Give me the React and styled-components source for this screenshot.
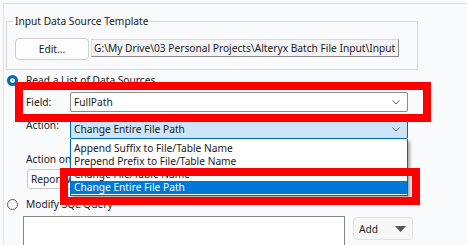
import styled, { createGlobalStyle } from "styled-components";

const GlobalStyle = createGlobalStyle`
  html, body {
    margin: 0;
    padding: 0;
    background: #f9fafc;
  }
  body {
    font-family: "Noto Sans", "Open Sans", sans-serif;
    font-size: 10.2px;
    color: #1b1b1b;
  }
`;

const Page = styled.div`
  position: relative;
  width: 467px;
  height: 245px;
  overflow: hidden;
  background: #f9fafc;
`;

const Frame = styled.div`
  margin: 3px 0 0 3px;
  height: 242px;
  box-sizing: border-box;
  border-top: 1px solid #dde2ea;
  border-left: 1px solid #dde2ea;
`;

const GroupBox = styled.fieldset`
  margin: 9px 0 0 2px;
  width: 412px;
  box-sizing: border-box;
  padding: 0 6px 9px;
  border: 1px solid #d6d6d6;
  min-width: 0;
`;

const Caption = styled.legend`
  padding: 0 2px;
  line-height: 16px;
`;

const TemplateRow = styled.div`
  display: flex;
  align-items: flex-start;
  gap: 2px;
  margin: 9px 0 0 2px;
`;

const Button = styled.div`
  width: 74px;
  height: 22px;
  box-sizing: border-box;
  border: 1px solid #cfcfcf;
  border-radius: 4px;
  background: #fdfdfd;
  display: flex;
  align-items: center;
  justify-content: center;
`;

const PathBox = styled.div`
  margin-top: 1px;
  width: 308px;
  height: 18px;
  box-sizing: border-box;
  padding: 0 2px;
  border: 1px solid;
  border-color: #d9d9d9 #8a8a8a #8a8a8a #d9d9d9;
  background: #f4f4f4;
  white-space: nowrap;
  overflow: hidden;
  line-height: 16px;
`;

const RadioRow = styled.div`
  display: flex;
  align-items: center;
  gap: 8px;
  height: 14px;
  margin: ${({ $top }) => $top}px 0 0 3px;
`;

const Radio = styled.span`
  width: 11px;
  height: 11px;
  box-sizing: border-box;
  border-radius: 50%;
  flex: none;
  ${({ $checked }) =>
    $checked
      ? `background: #0067c0; border: 3px solid #0067c0; box-shadow: inset 0 0 0 2px #fff;`
      : `border: 1px solid #5a5a5a; background: #fdfdfd;`}
`;

const FieldRow = styled.div`
  display: flex;
  align-items: ${({ $align }) => $align || "center"};
  margin: ${({ $top }) => $top}px 0 0 22px;
`;

const Label = styled.span`
  width: 44px;
  flex: none;
  line-height: 12px;
`;

const SelectWrap = styled.div`
  position: relative;
`;

const Select = styled.div`
  width: 338px;
  height: 20px;
  box-sizing: border-box;
  padding: 0 20px 0 3px;
  display: flex;
  align-items: center;
  border: 1px solid ${({ $open }) => ($open ? "#0067c0" : "#8a8a8a")};
  border-radius: 2px;
  background: ${({ $open }) => ($open ? "#cce4f7" : "#ffffff")};
  position: relative;
`;

const Chevron = styled.svg`
  position: absolute;
  right: 7px;
  top: 7px;
`;

const DropList = styled.div`
  position: absolute;
  left: 0;
  top: 100%;
  width: 338px;
  box-sizing: border-box;
  padding: 3px 0 1px;
  background: #ffffff;
  border: 1px solid #0067c0;
  border-top: none;
  box-shadow: 2px 2px 3px rgba(0, 0, 0, 0.35);
  z-index: 2;
`;

const Option = styled.div`
  height: 13px;
  line-height: 13px;
  padding-left: 3px;
  white-space: nowrap;
  ${({ $selected }) => $selected && `background: #0078d7; color: #ffffff;`}
`;

const PlainLabel = styled.div`
  margin: ${({ $top }) => $top}px 0 0 22px;
  line-height: 14px;
`;

const SmallSelect = styled.div`
  margin: 3px 0 0 23px;
  width: 110px;
  height: 20px;
  box-sizing: border-box;
  padding-left: 3px;
  display: flex;
  align-items: center;
  border: 1px solid #c9c9c9;
  border-radius: 3px;
  background: #fdfdfd;
`;

const QueryRow = styled.div`
  display: flex;
  align-items: flex-start;
  gap: 8px;
  margin: 5px 0 0 19px;
`;

const TextArea = styled.div`
  width: 322px;
  height: 60px;
  box-sizing: border-box;
  border: 1px solid #858585;
  background: #ffffff;
`;

const AddButton = styled.div`
  margin-top: 1px;
  width: 60px;
  height: 23px;
  box-sizing: border-box;
  padding: 0 6px 0 5px;
  display: flex;
  align-items: center;
  justify-content: space-between;
  border: 1px solid #e3e3e3;
  border-radius: 4px;
  background: #f7f7f7;
`;

const Highlight = styled.div`
  position: absolute;
  left: ${({ $x }) => $x}px;
  top: ${({ $y }) => $y}px;
  width: ${({ $w }) => $w}px;
  height: ${({ $h }) => $h}px;
  box-sizing: border-box;
  border: 8px solid #ff0000;
  pointer-events: none;
  z-index: 5;
`;

const ChevronIcon = () => (
  <Chevron width="8" height="5" viewBox="0 0 8 5">
    <path d="M0.5 0.5 L4 4 L7.5 0.5" fill="none" stroke="#5a5a5a" strokeWidth="1" />
  </Chevron>
);

export default function App() {
  return (
    <Page>
      <GlobalStyle />
      <Frame>
        <GroupBox>
          <Caption>Input Data Source Template</Caption>
          <TemplateRow>
            <Button>Edit...</Button>
            <PathBox>G:\My Drive\03 Personal Projects\Alteryx Batch File Input\Input Files\Template.xlsx</PathBox>
          </TemplateRow>
        </GroupBox>

        <RadioRow $top={3}>
          <Radio $checked />
          <span>Read a List of Data Sources</span>
        </RadioRow>

        <FieldRow $top={5}>
          <Label>Field:</Label>
          <Select>
            FullPath
            <ChevronIcon />
          </Select>
        </FieldRow>

        <FieldRow $top={7} $align="flex-start">
          <Label>Action:</Label>
          <SelectWrap>
            <Select $open>
              Change Entire File Path
              <ChevronIcon />
            </Select>
            <DropList>
              <Option>Append Suffix to File/Table Name</Option>
              <Option>Prepend Prefix to File/Table Name</Option>
              <Option>Change File/Table Name</Option>
              <Option $selected>Change Entire File Path</Option>
            </DropList>
          </SelectWrap>
        </FieldRow>

        <PlainLabel $top={13}>Action on Data Source Error</PlainLabel>
        <SmallSelect>Report Warning</SmallSelect>

        <RadioRow $top={8}>
          <Radio />
          <span>Modify SQL Query</span>
        </RadioRow>

        <QueryRow>
          <TextArea />
          <AddButton>
            Add
            <svg width="11" height="6" viewBox="0 0 11 6">
              <path d="M0 0 H11 L5.5 6 Z" fill="#555555" />
            </svg>
          </AddButton>
        </QueryRow>
      </Frame>

      <Highlight $x={15} $y={82} $w={416} $h={40} />
      <Highlight $x={60} $y={168} $w={360} $h={37} />
    </Page>
  );
}
